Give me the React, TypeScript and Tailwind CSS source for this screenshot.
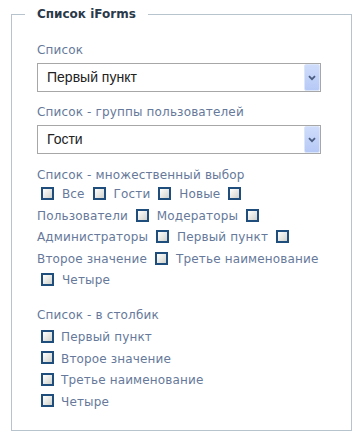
import React from "react";

function Check() {
  return (
    <input
      type="checkbox"
      className="appearance-none inline-block align-middle w-[13px] h-[13px] border-2 border-[#1f4e7c] bg-gradient-to-br from-white to-[#d2d2cc] ml-[4px] mr-[4px] my-0 relative top-[-1px]"
    />
  );
}

function FakeSelect({ value }: { value: string }) {
  return (
    <div className="flex w-[284px] h-[29px] border border-[#a7a7a7] bg-white">
      <span className="flex-1 pl-[9px] text-[14px] leading-[27px] text-[#222] font-['Liberation_Sans',sans-serif]">
        {value}
      </span>
      <span className="w-[16px] h-[27px] flex items-center justify-center bg-gradient-to-b from-[#cfdcfb] to-[#b6c9f6] border border-[#dce6fb] rounded-[2px]">
        <svg width="8" height="6" viewBox="0 0 8 6">
          <path d="M1 1.2 L4 4.2 L7 1.2" stroke="#4b5d80" strokeWidth="1.8" fill="none" />
        </svg>
      </span>
    </div>
  );
}

const label = "block text-[12px] leading-[16px] tracking-[0.15px] text-[#66799a]";

export default function App() {
  const multi = [
    "Все",
    "Гости",
    "Новые",
    "Пользователи",
    "Модераторы",
    "Администраторы",
    "Первый пункт",
    "Второе значение",
    "Третье наименование",
    "Четыре",
  ];
  const col = ["Первый пункт", "Второе значение", "Третье наименование", "Четыре"];
  return (
    <div className="w-[363px] h-[441px] bg-white font-['DejaVu_Sans',sans-serif] pt-[6px] pl-[11px]">
      <fieldset className="w-[341px] h-[425px] border border-[#b7c4cd] pl-[13px] pr-0 pt-0 pb-0 m-0">
        <legend className="px-[12px] text-[12px] leading-[17px] font-bold text-[#2b3a4a]">
          Список iForms
        </legend>
        <div className="pl-[12px] pt-[19px]">
          <span className={label}>Список</span>
          <div className="mt-[5px]">
            <FakeSelect value="Первый пункт" />
          </div>
          <span className={label + " mt-[12px]"}>Список - группы пользователей</span>
          <div className="mt-[5px]">
            <FakeSelect value="Гости" />
          </div>
          <span className={label + " mt-[13px]"}>Список - множественный выбор</span>
          <div className="mt-[1px] w-[290px] text-[12px] leading-[21.5px] tracking-[0.15px] text-[#66799a]">
            {multi.map((m, i) => (
              <React.Fragment key={i}>
                <Check /> <span>{m}</span>{" "}
              </React.Fragment>
            ))}
          </div>
          <span className={label + " mt-[15px]"}>Список - в столбик</span>
          <div className="mt-[4px] flex flex-col">
            {col.map((c, i) => (
              <div key={i} className="h-[21.5px] flex items-center text-[12px] tracking-[0.15px] text-[#66799a]">
                <Check />
                <span className="ml-[3px]">{c}</span>
              </div>
            ))}
          </div>
        </div>
      </fieldset>
    </div>
  );
}
